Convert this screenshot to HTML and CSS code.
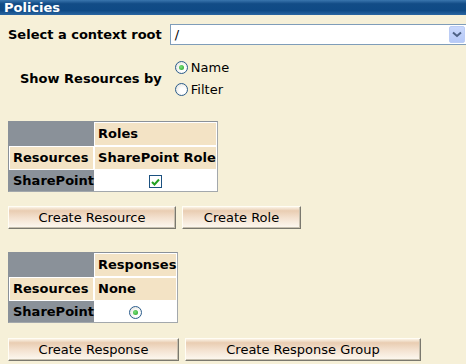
FILE: index.html
```html
<!DOCTYPE html>
<html lang="en">
<head>
  <meta charset="UTF-8"/>
  <title>Policies</title>
  <link rel="stylesheet" href="styles.css">
</head>
<body>

  <div class="titlebar">Policies</div>

  <div class="content">
    <!-- context root -->
    <div class="context-row">
      <span class="field-label">Select a context root</span>
      <div class="select">
        <span class="select-value">/</span>
        <span class="select-btn">
          <svg width="10" height="7" viewBox="0 0 10 7"><path d="M1 1.5 L5 5 L9 1.5" fill="none" stroke="#4d6185" stroke-width="2"/></svg>
        </span>
      </div>
    </div>

    <!-- show by -->
    <div class="show-row">
      <span class="show-label">Show Resources by</span>
      <div class="radio-group">
        <div class="radio-item"><span class="radio checked"></span>Name</div>
        <div class="radio-item"><span class="radio"></span>Filter</div>
      </div>
    </div>

    <!-- roles table -->
    <table class="grid">
      <tr>
        <th class="corner"></th>
        <th class="head">Roles</th>
      </tr>
      <tr>
        <th class="head">Resources</th>
        <th class="head">SharePoint Role</th>
      </tr>
      <tr>
        <th class="row-name">SharePoint</th>
        <td class="cell"><span class="checkbox"><svg width="9" height="8" viewBox="0 0 9 8"><path d="M1 4 L3.5 6.5 L8 1.5" fill="none" stroke="#21a121" stroke-width="2"/></svg></span></td>
      </tr>
    </table>

    <div class="button-row">
      <button class="btn btn-resource">Create Resource</button>
      <button class="btn btn-role">Create Role</button>
    </div>

    <!-- responses table -->
    <table class="grid grid-second">
      <tr>
        <th class="corner"></th>
        <th class="head">Responses</th>
      </tr>
      <tr>
        <th class="head">Resources</th>
        <th class="head">None</th>
      </tr>
      <tr>
        <th class="row-name">SharePoint</th>
        <td class="cell"><span class="radio checked"></span></td>
      </tr>
    </table>

    <div class="button-row">
      <button class="btn btn-response">Create Response</button>
      <button class="btn btn-group">Create Response Group</button>
    </div>
  </div>

</body>
</html>
```

FILE: styles.css
```css
:root {
  --page-bg:   #f6f0d8;
  --head-bg:   #f3e3c5;
  --grid-gray: #8a9199;
  --blue-dark: #0f4a85;
  --field-border: #7f9db9;
}
* { margin:0; padding:0; box-sizing:border-box; }
html, body {
  height:100%; overflow:hidden;
  font-family:'DejaVu Sans', Verdana, sans-serif;
  font-size:13px; color:#000;
  background:var(--page-bg);
}

/* ─── TITLE ───────────────────────── */
.titlebar {
  height:15px; line-height:15px;
  padding-left:4px;
  color:#fff; font-weight:bold;
  background:linear-gradient(#3a76ae 0, #124c86 25%, #0f4a85 70%, #2a66a2 100%);
}

.content { padding:0 8px; }

/* ─── CONTEXT ROOT ────────────────── */
.context-row {
  display:flex; align-items:center; gap:8px;
  margin-top:9px;
}
.field-label { font-weight:bold; white-space:nowrap; }
.select {
  flex:1; height:21px;
  margin-right:-8px;
  display:flex; align-items:center;
  background:#fff;
  border:1px solid var(--field-border);
  border-right:none;
}
.select-value { flex:1; padding-left:4px; }
.select-btn {
  width:16px; height:17px; margin-right:1px;
  display:flex; align-items:center; justify-content:center;
  background:linear-gradient(#c9d8fc, #b6c9f7);
  border:1px solid #bccdf5; border-radius:2px;
}

/* ─── SHOW BY ─────────────────────── */
.show-row {
  display:flex; align-items:center; gap:13px;
  margin-top:11px; padding-left:12px;
}
.show-label { font-weight:bold; white-space:nowrap; }
.radio-group { display:flex; flex-direction:column; }
.radio-item {
  display:flex; align-items:center; gap:3px;
  height:22px;
}
.radio {
  display:inline-block; width:13px; height:13px;
  border:1px solid #2b5c8c; border-radius:50%;
  background:radial-gradient(circle at 60% 60%, #fff 30%, #dcdcd4 100%);
  position:relative; vertical-align:middle;
}
.radio.checked::after {
  content:''; position:absolute;
  left:3px; top:3px; width:5px; height:5px; border-radius:50%;
  background:radial-gradient(circle at 40% 40%, #7be07b, #21a121);
}

/* ─── GRID TABLES ─────────────────── */
.grid {
  margin-top:21px;
  border-collapse:separate; border-spacing:0;
  background:var(--grid-gray);
  border:1px solid #a3a8ac;
  border-left-color:var(--grid-gray);
  border-top-color:var(--grid-gray);
}
.grid-second { margin-top:23px; }
.grid th, .grid td {
  text-align:left; white-space:nowrap;
  font-weight:bold;
}
.grid .head {
  background:var(--head-bg);
  border:1px solid #fff;
  padding:3px 0 3px 3px;
  line-height:16px;
}
.grid .corner { border:1px solid var(--grid-gray); }
.grid .row-name {
  padding:2px 0 2px 4px;
  line-height:17px;
}
.grid .cell {
  background:#fff; text-align:center;
  padding:2px; line-height:17px;
}
.checkbox {
  display:inline-flex; align-items:center; justify-content:center;
  width:13px; height:13px; vertical-align:middle;
  border:1px solid #1c5180; background:#fff;
}

/* ─── BUTTONS ─────────────────────── */
.button-row {
  display:flex; gap:6px;
  margin-top:14px;
}
.grid-second + .button-row { margin-top:15px; }
.btn {
  height:23px;
  font-family:inherit; font-size:13px; color:#000;
  border:1px solid; border-color:#fffdf5 #7a786e #7a786e #fffdf5;
  box-shadow:inset -1px -1px 0 #c7bfae;
  background:linear-gradient(#fbf3e6 0, #e9cdb2 18%, #f4e3d2 55%, #fdf9f1 100%);
  cursor:pointer;
}
.btn-resource { width:168px; }
.btn-role     { width:119px; }
.btn-response { width:171px; }
.btn-group    { width:236px; }
```
